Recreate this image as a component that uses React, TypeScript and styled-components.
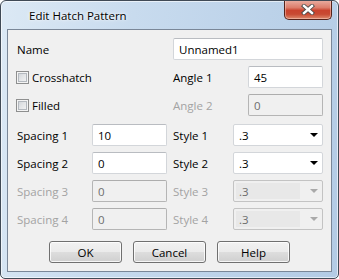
import React from "react";
import styled, { createGlobalStyle } from "styled-components";

const Global = createGlobalStyle`
  html, body { margin: 0; padding: 0; background: #ffffff; }
  body { font-family: "Segoe UI", "Open Sans", "Noto Sans", "Liberation Sans", sans-serif; }
  * { box-sizing: border-box; }
`;

const Window = styled.div`
  width: 339px;
  height: 279px;
  border: 1px solid #404a56;
  border-radius: 6px 6px 5px 5px;
  background: linear-gradient(100deg, #dce9f5 0%, #c8dbee 35%, #bcd2e9 70%, #b3cbe5 100%);
  box-shadow: inset 0 0 0 1px rgba(255, 255, 255, 0.6);
  display: flex;
  flex-direction: column;
  overflow: hidden;
`;

const TitleBar = styled.div`
  height: 28px;
  display: flex;
  align-items: flex-start;
  padding: 0 6px 0 28px;
`;

const Title = styled.div`
  margin-top: 8px;
  font-size: 11.5px;
  line-height: 14px;
  color: #000;
  text-shadow: 0 0 5px rgba(255, 255, 255, 0.9), 0 0 2px rgba(255, 255, 255, 0.9);
`;

const CloseButton = styled.div`
  margin-left: auto;
  margin-top: -1px;
  width: 48px;
  height: 20px;
  border: 1px solid #55231b;
  border-top: none;
  border-radius: 0 0 5px 5px;
  background: linear-gradient(#eab0a4 0%, #dc7d6b 40%, #c9432e 55%, #c84a33 75%, #dd8a6d 100%);
  box-shadow: inset 0 0 0 1px rgba(255, 220, 210, 0.45);
  display: flex;
  align-items: center;
  justify-content: center;
`;

const Client = styled.div`
  flex: 1;
  margin: 0 6px 6px 6px;
  border: 1px solid #7a8798;
  background: #f0f0f0;
  display: flex;
  flex-direction: column;
  padding: 8px 8px 0 9px;
`;

const Form = styled.div<{ $top?: number }>`
  display: grid;
  grid-template-columns: 75px 75px 6px 150px;
  grid-auto-rows: 22px;
  row-gap: 6px;
  margin-top: ${(p) => p.$top ?? 0}px;
`;

const Label = styled.div<{ $disabled?: boolean; $span?: number }>`
  grid-column: span ${(p) => p.$span ?? 1};
  display: flex;
  align-items: center;
  font-size: 11.5px;
  color: ${(p) => (p.$disabled ? "#a3a3a3" : "#000")};
  white-space: nowrap;
`;

const Spacer = styled.div``;

const RightCell = styled.div`
  display: flex;
  align-items: center;
  justify-content: space-between;
`;

const Field = styled.div<{ $disabled?: boolean; $w?: number }>`
  width: ${(p) => (p.$w ? `${p.$w}px` : "100%")};
  height: 22px;
  border: 1px solid ${(p) => (p.$disabled ? "#b5b5b5" : "#d3d6da")};
  border-top-color: ${(p) => (p.$disabled ? "#adadad" : "#b9bcc1")};
  border-radius: 2px;
  background: ${(p) => (p.$disabled ? "#f0f0f0" : "#ffffff")};
  color: ${(p) => (p.$disabled ? "#6d6d6d" : "#000")};
  font-size: 11.5px;
  display: flex;
  align-items: center;
  padding-left: 5px;
`;

const Combo = styled.div<{ $disabled?: boolean }>`
  width: 90px;
  height: 22px;
  border: 1px solid ${(p) => (p.$disabled ? "#c3c3c3" : "#d3d6da")};
  border-radius: 2px;
  background: ${(p) => (p.$disabled ? "#f0f0f0" : "#ffffff")};
  display: flex;
  align-items: center;
  padding: 2px 4px 2px 2px;
  font-size: 11.5px;
  color: ${(p) => (p.$disabled ? "#6d6d6d" : "#000")};
`;

const ComboText = styled.div<{ $disabled?: boolean }>`
  flex: 1;
  height: 100%;
  display: flex;
  align-items: center;
  padding-left: 3px;
  background: ${(p) => (p.$disabled ? "#e8e8e8" : "transparent")};
  margin-right: 10px;
`;

const Arrow = styled.div<{ $disabled?: boolean }>`
  width: 0;
  height: 0;
  border-left: 4px solid transparent;
  border-right: 4px solid transparent;
  border-top: 4px solid ${(p) => (p.$disabled ? "#a9a9a9" : "#000")};
`;

const Check = styled.span`
  width: 13px;
  height: 13px;
  margin: 0 3px 0 -1px;
  border: 1px solid #8e8f8f;
  background: linear-gradient(135deg, #cbcfd5 0%, #e4e6e8 50%, #f7f7f7 100%);
  box-shadow: inset 0 0 0 1px #f4f4f4, inset 0 0 0 2px #b4b9bf;
  flex: none;
`;

const ButtonRow = styled.div`
  display: flex;
  justify-content: center;
  gap: 11px;
  margin-top: 11px;
  padding-right: 1px;
`;

const Button = styled.div`
  width: 73px;
  height: 22px;
  border: 1px solid #707070;
  border-radius: 3px;
  background: linear-gradient(#f2f2f2 0%, #ebebeb 48%, #dddddd 52%, #cfcfcf 100%);
  box-shadow: inset 0 0 0 1px rgba(255, 255, 255, 0.8);
  display: flex;
  align-items: center;
  justify-content: center;
  font-size: 11.5px;
  color: #000;
`;

const CloseIcon = () => (
  <svg width="14" height="11" viewBox="0 0 14 11">
    <path d="M3 2 L11 9 M11 2 L3 9" stroke="#4a4a4a" strokeWidth="4.2" strokeLinecap="square" />
    <path d="M3 2 L11 9 M11 2 L3 9" stroke="#ffffff" strokeWidth="2.4" strokeLinecap="square" />
  </svg>
);

const NumField = ({ value, disabled }: { value: string; disabled?: boolean }) => (
  <Field $disabled={disabled} $w={75}>{value}</Field>
);

const ComboBox = ({ value, disabled }: { value: string; disabled?: boolean }) => (
  <Combo $disabled={disabled}>
    <ComboText $disabled={disabled}>{value}</ComboText>
    <Arrow $disabled={disabled} />
  </Combo>
);

const spacingRows = [
  { n: 1, v: "10", disabled: false },
  { n: 2, v: "0", disabled: false },
  { n: 3, v: "0", disabled: true },
  { n: 4, v: "0", disabled: true },
];

export default function App() {
  return (
    <>
      <Global />
      <Window>
        <TitleBar>
          <Title>Edit Hatch Pattern</Title>
          <CloseButton>
            <CloseIcon />
          </CloseButton>
        </TitleBar>
        <Client>
          <Form>
            <Label $span={2}>Name</Label>
            <Spacer />
            <Field>Unnamed1</Field>

            <Label $span={2}>
              <Check />
              Crosshatch
            </Label>
            <Spacer />
            <RightCell>
              <Label>Angle 1</Label>
              <NumField value="45" />
            </RightCell>

            <Label $span={2}>
              <Check />
              Filled
            </Label>
            <Spacer />
            <RightCell>
              <Label $disabled>Angle 2</Label>
              <NumField value="0" disabled />
            </RightCell>
          </Form>
          <Form $top={8}>
            {spacingRows.map((r) => (
              <React.Fragment key={r.n}>
                <Label $disabled={r.disabled}>Spacing {r.n}</Label>
                <NumField value={r.v} disabled={r.disabled} />
                <Spacer />
                <RightCell>
                  <Label $disabled={r.disabled}>Style {r.n}</Label>
                  <ComboBox value=".3" disabled={r.disabled} />
                </RightCell>
              </React.Fragment>
            ))}
          </Form>
          <ButtonRow>
            <Button>OK</Button>
            <Button>Cancel</Button>
            <Button>Help</Button>
          </ButtonRow>
        </Client>
      </Window>
    </>
  );
}
